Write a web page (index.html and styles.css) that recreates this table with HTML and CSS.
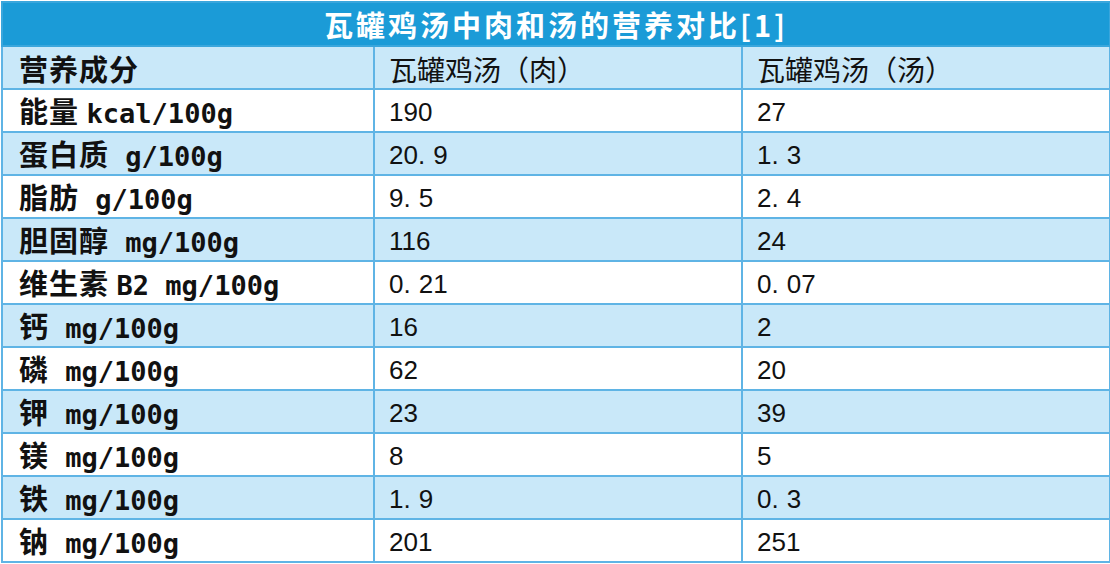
FILE: index.html
```html
<!DOCTYPE html>
<html lang="zh-CN">
<head>
<meta charset="utf-8">
<title>瓦罐鸡汤中肉和汤的营养对比</title>
<link rel="stylesheet" href="styles.css">
</head>
<body>
<table class="nutri">
  <colgroup>
    <col class="c1"><col class="c2"><col class="c3">
  </colgroup>
  <thead>
    <tr class="title"><th colspan="3">瓦罐鸡汤中肉和汤的营养对比[1]</th></tr>
    <tr class="head"><th class="name">营养成分</th><th>瓦罐鸡汤（肉）</th><th>瓦罐鸡汤（汤）</th></tr>
  </thead>
  <tbody>
    <tr><td class="name">能量 <span class="u">kcal/100g</span></td><td>190</td><td>27</td></tr>
    <tr class="alt"><td class="name">蛋白质<span class="u"> g/100g</span></td><td>20<span class="dot">.</span>9</td><td>1<span class="dot">.</span>3</td></tr>
    <tr><td class="name">脂肪<span class="u"> g/100g</span></td><td>9<span class="dot">.</span>5</td><td>2<span class="dot">.</span>4</td></tr>
    <tr class="alt"><td class="name">胆固醇<span class="u"> mg/100g</span></td><td>116</td><td>24</td></tr>
    <tr><td class="name">维生素 <span class="u">B2 mg/100g</span></td><td>0<span class="dot">.</span>21</td><td>0<span class="dot">.</span>07</td></tr>
    <tr class="alt"><td class="name">钙<span class="u"> mg/100g</span></td><td>16</td><td>2</td></tr>
    <tr><td class="name">磷<span class="u"> mg/100g</span></td><td>62</td><td>20</td></tr>
    <tr class="alt"><td class="name">钾<span class="u"> mg/100g</span></td><td>23</td><td>39</td></tr>
    <tr><td class="name">镁<span class="u"> mg/100g</span></td><td>8</td><td>5</td></tr>
    <tr class="alt"><td class="name">铁<span class="u"> mg/100g</span></td><td>1<span class="dot">.</span>9</td><td>0<span class="dot">.</span>3</td></tr>
    <tr><td class="name">钠<span class="u"> mg/100g</span></td><td>201</td><td>251</td></tr>
  </tbody>
</table>
</body>
</html>
```
FILE: styles.css
```css
html, body {
  margin: 0;
  padding: 0;
  background: #ffffff;
}
body {
  padding: 1px 0 0 1px;
}
.nutri {
  border-collapse: collapse;
  width: 1108px;
  table-layout: fixed;
  font-family: "Liberation Sans", "Noto Sans CJK SC", sans-serif;
  color: #111111;
}
.c1 { width: 372px; }
.c2 { width: 368px; }
.c3 { width: 368px; }
.nutri th, .nutri td {
  border: 2px solid #5fb4e5;
  padding: 2px 0 0 14px;
  height: 39px;
  text-align: left;
  vertical-align: middle;
  white-space: nowrap;
  font-size: 26px;
  font-weight: normal;
  line-height: 1;
}
.nutri .title th {
  background: #1b9bd7;
  color: #ffffff;
  text-align: center;
  padding: 0;
  height: 42px;
  font-family: "Noto Sans CJK SC", sans-serif;
  font-weight: bold;
  font-size: 29px;
  letter-spacing: 3px;
  border-color: #3aa6dc;
}
.nutri .head th {
  background: #c9e8f9;
  font-family: "Noto Sans CJK SC", sans-serif;
  font-size: 28px;
}
.nutri .head th.name {
  font-weight: bold;
  font-size: 29px;
}
.nutri .name {
  padding-left: 16px;
  font-family: "Noto Sans CJK SC", sans-serif;
  font-weight: bold;
  font-size: 29px;
  letter-spacing: 1px;
}
.nutri .u {
  font-family: "DejaVu Sans Mono", monospace;
  font-weight: bold;
  font-size: 27px;
  letter-spacing: 0;
}
.nutri tbody tr { background: #ffffff; }
.nutri tbody tr.alt { background: #c9e8f9; }
.dot {
  margin-right: 8px;
}
```
